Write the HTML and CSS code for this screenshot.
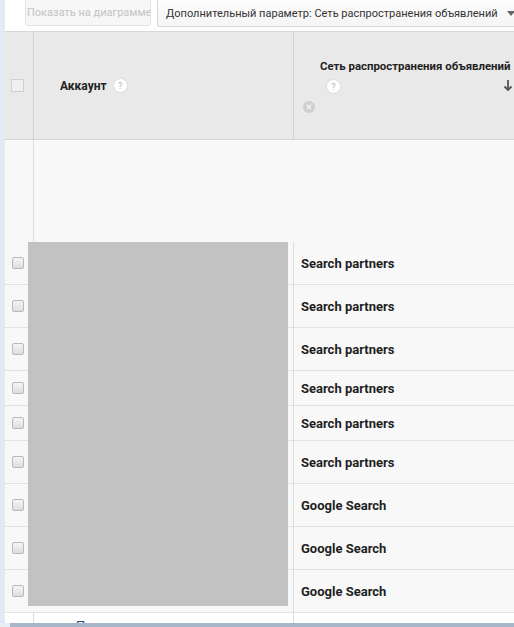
FILE: index.html
```html
<!DOCTYPE html>
<html>
<head>
<meta charset="utf-8">
<link rel="stylesheet" href="styles.css">
</head>
<body>
<div class="page">
  <div class="main">
    <div class="toolbar">
      <div class="btn-chart">Показать на диаграмме</div>
      <div class="dropdown">
        <span>Дополнительный параметр: Сеть распространения объявлений</span>
        <span class="caret"></span>
      </div>
    </div>
    <div class="table">
      <div class="head">
        <div class="cell c-check"><span class="hcheck"></span></div>
        <div class="cell c-acc"><span class="htitle">Аккаунт</span><span class="help">?</span></div>
        <div class="cell c-net">
          <div class="htitle net-title">Сеть распространения объявлений</div>
          <span class="help help-net">?</span>
          <span class="remove"><svg width="12" height="12" viewBox="0 0 12 12"><circle cx="6" cy="6" r="6" fill="#cfcfcf"/><path d="M3.8 3.8L8.2 8.2M8.2 3.8L3.8 8.2" stroke="#f2f2f2" stroke-width="1.6"/></svg></span>
          <span class="sort"><svg width="10" height="12" viewBox="0 0 10 12"><path d="M5 0V10M1.5 6.5L5 10L8.5 6.5" stroke="#555" stroke-width="1.8" fill="none"/></svg></span>
        </div>
      </div>
      <div class="blank">
        <div class="b-check"></div>
        <div></div>
      </div>
      <div class="rows">
        <div class="row tall"><div class="c-check"><span class="cb"></span></div><div class="c-acc"></div><div class="c-net">Search partners</div></div>
        <div class="row tall"><div class="c-check"><span class="cb"></span></div><div class="c-acc"></div><div class="c-net">Search partners</div></div>
        <div class="row tall"><div class="c-check"><span class="cb"></span></div><div class="c-acc"></div><div class="c-net">Search partners</div></div>
        <div class="row short"><div class="c-check"><span class="cb"></span></div><div class="c-acc"></div><div class="c-net">Search partners</div></div>
        <div class="row short"><div class="c-check"><span class="cb"></span></div><div class="c-acc"></div><div class="c-net">Search partners</div></div>
        <div class="row tall"><div class="c-check"><span class="cb"></span></div><div class="c-acc"></div><div class="c-net">Search partners</div></div>
        <div class="row tall"><div class="c-check"><span class="cb"></span></div><div class="c-acc"></div><div class="c-net">Google Search</div></div>
        <div class="row tall"><div class="c-check"><span class="cb"></span></div><div class="c-acc"></div><div class="c-net">Google Search</div></div>
        <div class="row tall"><div class="c-check"><span class="cb"></span></div><div class="c-acc"></div><div class="c-net">Google Search</div></div>
        <div class="row last"><div class="c-check"></div><div class="c-acc"><span class="more">Показать все строки</span></div><div class="c-net"></div></div>
        <div class="redact"></div>
      </div>
    </div>
  </div>
  <div class="bottom"><div class="bottom-left"></div><div class="bottom-bar"></div></div>
</div>
</body>
</html>
```

FILE: styles.css
```css
html, body {
  margin: 0;
  padding: 0;
}
body {
  width: 514px;
  height: 627px;
  overflow: hidden;
  font-family: Roboto, "Liberation Sans", Arial, sans-serif;
  background: #ffffff;
  color: #222;
}
.page {
  display: flex;
  flex-direction: column;
  height: 627px;
}
.main {
  flex: 1;
  min-height: 0;
  border-left: 5px solid #e3eaf5;
  display: flex;
  flex-direction: column;
  overflow: hidden;
  background: #fff;
}
.toolbar {
  flex-shrink: 0;
  height: 32px;
  display: flex;
  align-items: flex-start;
  background: #fff;
  box-sizing: border-box;
  border-bottom: 1px solid #d6d6d6;
}
.btn-chart {
  flex-shrink: 0;
  margin-left: 20px;
  margin-top: -2px;
  width: 126px;
  height: 28px;
  box-sizing: border-box;
  border: 1px solid #e2e2e2;
  border-radius: 3px;
  background: #f7f7f7;
  color: #c3c3c3;
  font-size: 11px;
  line-height: 28px;
  white-space: nowrap;
  overflow: hidden;
  padding-left: 1px;
}
.dropdown {
  margin-left: 6px;
  margin-top: -2px;
  flex: 1;
  min-width: 0;
  height: 29px;
  box-sizing: border-box;
  border: 1px solid #d9d9d9;
  border-right: none;
  border-radius: 3px 0 0 3px;
  background: linear-gradient(#fdfdfd, #f5f5f5);
  color: #333;
  font-size: 11px;
  line-height: 29px;
  padding-left: 8px;
  display: flex;
  white-space: nowrap;
  overflow: hidden;
}
.caret {
  flex-shrink: 0;
  margin-left: 9px;
  margin-top: 12px;
  width: 0;
  height: 0;
  border-left: 4px solid transparent;
  border-right: 4px solid transparent;
  border-top: 5px solid #666;
}
.table {
  display: flex;
  flex-direction: column;
  flex: 1;
  min-height: 0;
}
.head {
  flex-shrink: 0;
  height: 107px;
  display: grid;
  grid-template-columns: 29px 260px 1fr;
  background: #e9e9e9;
  border-bottom: 1px solid #d4d4d4;
}
.head .c-check {
  border-right: 1px solid #d2d2d2;
  display: flex;
  align-items: center;
  justify-content: center;
}
.hcheck {
  width: 11px;
  height: 11px;
  border: 1px solid #d0d0d0;
  background: #efefef;
  margin-left: -4px;
}
.head .c-acc {
  border-right: 1px solid #d2d2d2;
  display: flex;
  align-items: center;
  padding-left: 26px;
}
.htitle {
  font-weight: bold;
  font-size: 12px;
  color: #222;
}
.help {
  display: inline-flex;
  align-items: center;
  justify-content: center;
  width: 13px;
  height: 13px;
  border-radius: 50%;
  background: #fff;
  border: 1px solid #dcdcdc;
  color: #b0b0b0;
  font-size: 9px;
  margin-left: 6px;
}
.head .c-net {
  position: relative;
  padding-left: 26px;
  overflow: hidden;
}
.net-title {
  margin-top: 27px;
  white-space: nowrap;
  font-size: 11.4px;
}
.help-net {
  position: absolute;
  left: 32px;
  top: 47px;
  margin: 0;
}
.remove {
  position: absolute;
  left: 9px;
  top: 69px;
  width: 12px;
  height: 12px;
}
.remove svg, .sort svg { display: block; }
.sort {
  position: absolute;
  left: 209px;
  top: 48px;
}
.blank {
  flex-shrink: 0;
  height: 102px;
  display: grid;
  grid-template-columns: 29px 1fr;
  background: #f8f8f8;
}
.b-check {
  border-right: 1px solid #dcdcdc;
}
.rows {
  position: relative;
  flex: 1;
  min-height: 0;
  display: flex;
  flex-direction: column;
}
.row {
  flex-shrink: 0;
  display: grid;
  grid-template-columns: 29px 260px 1fr;
  background: #f8f8f8;
  border-bottom: 1px solid #e2e2e2;
  box-sizing: border-box;
}
.row.tall { height: 43px; }
.row.short { height: 35px; }
.row .c-check {
  display: flex;
  align-items: center;
  padding-left: 7px;
}
.cb {
  width: 10px;
  height: 10px;
  border: 1px solid #b9b9b9;
  border-radius: 2px;
  background: linear-gradient(#f4f4f4, #dedede);
}
.row .c-acc {
  border-right: 1px solid #dcdcdc;
}
.row .c-net {
  display: flex;
  align-items: center;
  padding-left: 7px;
  font-weight: bold;
  font-size: 13px;
  color: #1f1f1f;
}
.row.last {
  flex: 1 1 0;
  min-height: 0;
  background: #fff;
  border-bottom: none;
  overflow: hidden;
}
.row.last .c-check {
  border-right: 1px solid #dcdcdc;
}
.more {
  display: block;
  margin-left: 42px;
  margin-top: 5px;
  font-size: 13px;
  color: #1c4f7d;
  white-space: nowrap;
}
.redact {
  position: absolute;
  left: 23px;
  top: 0;
  width: 260px;
  height: 364px;
  background: #c2c2c2;
}
.bottom {
  flex-shrink: 0;
  height: 4px;
  display: flex;
}
.bottom-left {
  width: 10px;
  background: #e9eef6;
}
.bottom-bar {
  flex: 1;
  background: #a9b6c9;
}
```
